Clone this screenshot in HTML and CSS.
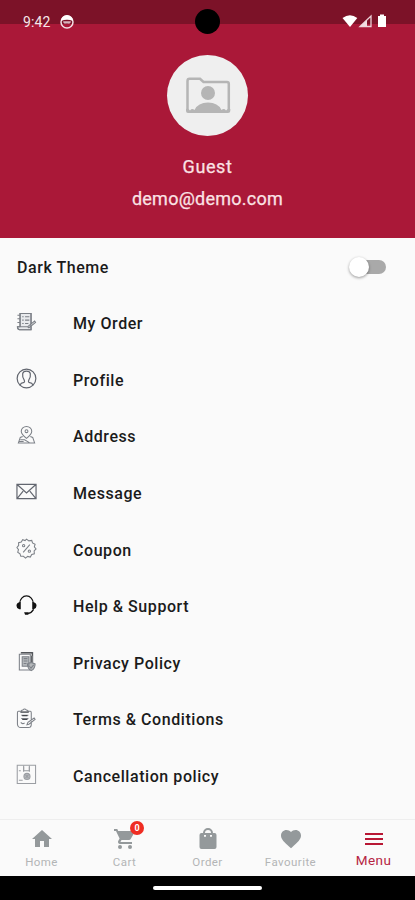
FILE: index.html
```html
<!DOCTYPE html>
<html lang="en">
<head>
<meta charset="utf-8">
<title>Menu</title>
<link rel="stylesheet" href="styles.css">
</head>
<body>
<div class="screen">
  <header class="header">
    <div class="status">
      <span class="time">9:42</span>
      <svg class="status-app" width="14" height="14" viewBox="0 0 14 14"><circle cx="7" cy="7" r="6" fill="none" stroke="#f3dfe4" stroke-width="1.5"/><path d="M1 6A6 6 0 0 1 13 6Q7 3.500 1 6Z" fill="#fff"/><path d="M3.200 6.300h7.600v1q-1 2-2.600 1.200h-2.400q-1.800.6-2.600-1.200Z" fill="#d7b4bd"/></svg>
      <svg class="status-icons" width="46" height="15" viewBox="0 0 46 15"><path d="M.5 4Q8 -1.500 15.300 4L8 13Z" fill="#fff"/><path d="M18 12.500 29 2v10.500Z" fill="none" stroke="#ecd0d7" stroke-width="1.3"/><path d="M18 12.500 25 6V12.500Z" fill="#f1dce1"/><path d="M36 2h2V.5h4V2h2v11h-8Z" fill="#fff"/></svg>
      <span class="camera"></span>
    </div>
    <div class="avatar">
      <svg width="46" height="37" viewBox="0 0 46 37"><path d="M2.500 33V4Q2.500 1.800 4.500 1.800H15L18.500 5H42Q43.800 5 43.800 7V33" fill="none" stroke="#b5b5b5" stroke-width="2.500"/><circle cx="23" cy="16" r="7" fill="#b5b5b5"/><path d="M1 32Q3.500 31 5 33.500Q7 31 9.500 33Q13 25.500 23 25.500T36.500 33Q39 31 41 33.500Q43 31 45.300 32V34Q45.300 36 43 36H3Q1 36 1 34Z" fill="#b5b5b5"/></svg>
    </div>
    <div class="name">Guest</div>
    <div class="email">demo@demo.com</div>
  </header>
  <main class="list">
    <div class="row theme"><span class="dark">Dark Theme</span><span class="switch"><i></i></span></div>
    <div class="row"><svg class="icon" viewBox="0 0 22 22"><path d="M4 1.500H15.500V18.500H4Q1.500 18.500 1.500 15.500H4Z" fill="#e8eaed"/><path d="M4.500 1.500H16V12M16 15V18.500H3.500Q1.300 18 1.500 15.500H12.500M4.500 1.500V15M1.500 3.500H4M1.500 7H4M1.500 11H4M6.500 5H8M9.500 5H14M6.500 8.500H8M9.500 8.500H14M6.500 12H8M9.500 12H13M12 15.500 19.500 9.500 20.500 11 13.500 16.500Z"/></svg><span>My Order</span></div>
    <div class="row"><svg class="icon profile" viewBox="0 0 22 22"><circle cx="11" cy="11" r="9.800"/><path d="M4 18Q5 15.500 8.500 15Q9.500 14 8.500 12.500Q6.500 10 7 6Q7.500 3.200 11 3.200T15 6Q15.500 10 13.500 12.500Q12.500 14 13.500 15Q17 15.500 18 18"/></svg><span>Profile</span></div>
    <div class="row"><svg class="icon" viewBox="0 0 22 22"><path d="M11 14Q5.500 9.500 5.500 6.500A5.500 5 0 0 1 16.500 6.500Q16.500 9.500 11 14ZM7 12 4.500 13 2.500 18.800H19.500L17.500 13 15 12M4.500 15.500H9L14 18.500M3.500 17.200H8"/><circle cx="11" cy="6.500" r="1.500"/></svg><span>Address</span></div>
    <div class="row"><svg class="icon mail" viewBox="0 0 22 22"><path d="M1 3.500H21V18.500H1ZM1.500 4 11 12.500 20.500 4M1.500 18 7.500 10.500M20.500 18 14.500 10.500"/></svg><span>Message</span></div>
    <div class="row"><svg class="icon" viewBox="0 0 22 22"><path d="M11 1.200 13.500 3 16.500 2.500 17.300 5.200 20 6.500 19.200 9.300 21 11.500 19 13.500 19.200 16.500 16.500 17.300 15 20 12.200 19.300 10 21 7.800 19.200 5 19.200 4.200 16.500 1.800 15 2.600 12.200 1 10 2.800 7.800 2.700 5 5.500 4.300 7 1.800 9.500 2.700ZM14.500 7 7.500 15"/><circle cx="8" cy="8" r="1.200"/><circle cx="14" cy="13.800" r="1.200"/></svg><span>Coupon</span></div>
    <div class="row"><svg class="icon support" viewBox="0 0 22 22"><path d="M4 8.500A7 7.500 0 0 1 18 8.500M18.500 15Q16 19 12.500 19.300"/><path class="solid" d="M5 7.500V15H3.500Q.5 14 .5 11.200T3.500 7.500ZM17 7.500V15H18.500Q21.500 14 21.500 11.200T18.500 7.500ZM8.500 18h4.500v2.600H9.500Z"/></svg><span>Help &amp; Support</span></div>
    <div class="row"><svg class="icon privacy" viewBox="0 0 22 22"><path d="M3.500 3.500H15V20H3.500ZM5.500 1.500H17.500V13"/><path class="dark-line" d="M5 2H17V5M16.500 5V12"/><path class="grey" d="M6.500 6H13.500V16H6.500ZM16 12 20 13.500Q20 18.500 16 20.500Q12 18.500 12 13.500Z"/><path d="M8 8H12M8 10.500H12M8 13H11M14 16 15.700 18 18.500 14.500"/></svg><span>Privacy Policy</span></div>
    <div class="row"><svg class="icon terms" viewBox="0 0 22 22"><path d="M4.500 3.500H2.500Q1.500 3.500 1.500 5V17Q2 20.500 5 20.500H13Q16 20.500 16 17V14M13 3.500H15Q16 3.500 16 5V12M5 4.500Q5 2 7.200 2 9 0 10.800 2 13 2 13 4.500ZM5.500 7.500H13M5.500 11H13M5 15Q7 17.500 9 15.500M11.500 17.500 12.500 15 19 10.500 20 12 13.500 17Z"/><path class="dark-line" d="M5 4.200H13M6.500 8H12M6.500 12H12"/></svg><span>Terms &amp; Conditions</span></div>
    <div class="row"><svg class="icon cancel" viewBox="0 0 22 22"><path d="M1.300 1.300H20.500V20.500H1.300Z"/><path d="M8 1.500V8M14 1.500V8M3 7H5M3 17H7"/><path d="M8 3V7H14V3"/><circle class="grey" cx="11.500" cy="13" r="3.200"/><path d="M10 11.500 13 14.500M13 11.500 10 14.500"/></svg><span>Cancellation policy</span></div>
  </main>
  <nav class="nav">
    <a class="tab"><svg viewBox="0 0 24 24"><path d="M10 20v-6h4v6h5v-8h3L12 3 2 12h3v8z"/></svg><span>Home</span></a>
    <a class="tab"><svg viewBox="0 0 24 24"><path d="M7 18a2 2 0 1 0 0 4 2 2 0 0 0 0-4zM1 2v2h2l3.600 7.600-1.400 2.400C4.500 15.400 5.500 17 7 17h12v-2H7.400l1.100-2h7.500c.8 0 1.400-.4 1.700-1L21.700 5c.4-.8-.1-1-.9-1H5.200l-.9-2zm16 16a2 2 0 1 0 0 4 2 2 0 0 0 0-4z"/></svg><b class="badge">0</b><span>Cart</span></a>
    <a class="tab"><svg viewBox="0 0 24 24"><path d="M18.500 6H17A5 5 0 0 0 7 6H5.500Q3.500 6 3.500 8V20Q3.500 22 5.500 22H18.500Q20.500 22 20.500 20V8Q20.500 6 18.500 6ZM12 3A3 3 0 0 1 15 6H9A3 3 0 0 1 12 3ZM10 9A1 1 0 0 1 8 9V8H10ZM16 9A1 1 0 0 1 14 9V8H16Z"/></svg><span>Order</span></a>
    <a class="tab"><svg viewBox="0 0 24 24"><path d="M12 21.350l-1.450-1.320C5.400 15.360 2 12.280 2 8.500 2 5.420 4.420 3 7.500 3c1.740 0 3.410.81 4.500 2.090C13.090 3.810 14.760 3 16.500 3 19.580 3 22 5.420 22 8.500c0 3.780-3.400 6.860-8.550 11.540L12 21.350z"/></svg><span>Favourite</span></a>
    <a class="tab active"><svg viewBox="0 0 24 24"><path d="M3 18h18v-2H3v2zm0-5h18v-2H3v2zm0-7v2h18V6H3z"/></svg><span>Menu</span></a>
  </nav>
  <div class="gesture"><i></i></div>
</div>
</body>
</html>
```
FILE: styles.css
```css
* { box-sizing: border-box; }
body { margin: 0; font-family: Roboto, "Liberation Sans", sans-serif; }
.screen { width: 415px; height: 900px; display: flex; flex-direction: column; background: #fafafa; overflow: hidden; }
.header { height: 238px; flex: none; display: flex; flex-direction: column; align-items: center; color: #fbe3e5; background: linear-gradient(#7c1228 0 24.5px, #aa1838 24.5px); }
.status { position: relative; width: 100%; height: 43px; display: flex; align-items: center; padding: 0 27px 0 23px; flex: none; }
.time { font-size: 14px; letter-spacing: .1px; color: #f6e6e9; }
.status-app { margin-left: 10px; }
.status-icons { margin-left: auto; }
.camera { position: absolute; left: 195px; top: 9px; width: 25px; height: 25px; border-radius: 50%; background: #000; }
.avatar { width: 81px; height: 81px; margin-top: 12px; flex: none; border-radius: 50%; background: #efefef; display: flex; align-items: center; justify-content: center; }
.name, .email { font-size: 18px; line-height: 24px; letter-spacing: .25px; -webkit-text-stroke: .25px currentColor; }
.name { margin-top: 19px; letter-spacing: .6px; }
.email { margin-top: 8px; }
.list { flex: none; height: 581px; padding-top: 1px; }
.row { height: 56.55px; display: flex; align-items: center; padding: 0 29px 0 16px; font-size: 16px; font-weight: 500; letter-spacing: .56px; color: #1b1b1b; }
.icon { width: 21px; height: 21px; margin: -3px 36px 0 0; flex: none; fill: none; stroke: #7c8087; stroke-width: 1.1; }
.profile, .mail { stroke: #62666f; stroke-width: 1.25; }
.support { stroke: #111; stroke-width: 1.3; }
.support .solid { fill: #111; stroke: none; }
.dark-line { stroke: #44474b; stroke-width: 1.2; }
.grey { fill: #b5b8bb; }
.cancel { stroke: #9b9ea3; }
.theme { justify-content: space-between; }
.dark { margin-left: 1px; }
.switch { width: 37px; height: 22px; display: flex; align-items: center; justify-content: flex-end; position: relative; }
.switch::before { content: ""; width: 31px; height: 14px; border-radius: 7px; background: #a9a9a9; }
.switch i { position: absolute; left: 0; top: 1px; width: 20px; height: 20px; border-radius: 50%; background: #fff; box-shadow: 0 1px 3px rgba(0,0,0,.4); }
.nav { height: 57px; flex: none; display: flex; border-top: 1px solid #eee; background: #fafafa; }
.tab { position: relative; flex: 1; display: flex; flex-direction: column; align-items: center; padding-top: 7px; font-size: 11.5px; line-height: 14px; letter-spacing: .45px; color: #b3b5b6; }
.tab svg { width: 24px; height: 24px; fill: #94999b; }
.tab span { margin-top: 4px; }
.badge { position: absolute; left: 47px; top: 1px; width: 14px; height: 14px; border-radius: 50%; background: #ef2d23; color: #fff; font-size: 9px; line-height: 14px; text-align: center; letter-spacing: 0; }
.tab.active { color: #b62543; font-size: 13.5px; }
.tab.active svg { fill: #b81734; }
.tab.active span { margin-top: 2px; }
.gesture { height: 24px; flex: none; background: #000; display: flex; align-items: center; justify-content: center; }
.gesture i { width: 109px; height: 4px; border-radius: 2px; background: #fff; }
```
